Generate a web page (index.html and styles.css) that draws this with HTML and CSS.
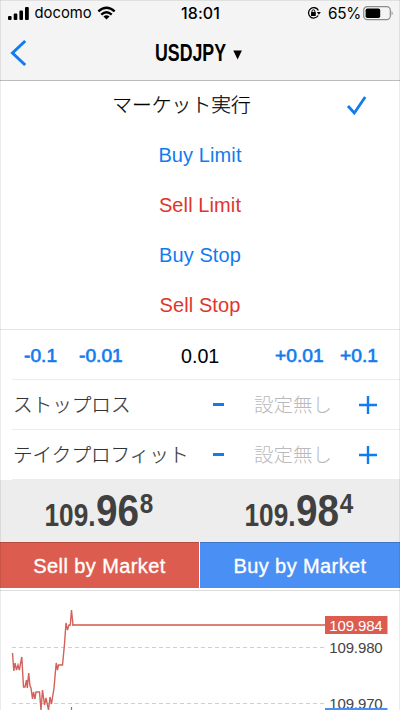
FILE: index.html
```html
<!DOCTYPE html>
<html lang="ja">
<head>
<meta charset="utf-8">
<title>USDJPY</title>
<link rel="stylesheet" href="styles.css">
</head>
<body>
<div class="screen">
  <header class="top">
    <div class="status">
      <div class="status-left">
        <svg width="21" height="13" viewBox="0 0 21 13"><rect x="0" y="9" width="3.6" height="4" rx="1"/><rect x="5.7" y="6.5" width="3.6" height="6.5" rx="1"/><rect x="11.4" y="3.5" width="3.6" height="9.5" rx="1"/><rect x="17" y="0" width="3.8" height="13" rx="1"/></svg>
        <span class="carrier">docomo</span>
        <svg width="19" height="14" viewBox="0 0 20 14"><g fill="none" stroke="#000" stroke-width="2.5"><path d="M1.4 5.2Q10 -2.4 18.6 5.2"/><path d="M4.5 8.6Q10 3.8 15.5 8.6"/></g><path d="M6.8 10.6Q10 8 13.2 10.6L10 13.8Z"/></svg>
      </div>
      <span class="time">18:01</span>
      <div class="status-right">
        <svg width="14" height="14" viewBox="0 0 14 14"><path d="M11.2 9.5A5.2 5.2 0 1 1 11.4 4.5" fill="none" stroke="#000" stroke-width="1.3"/><path d="M9.8 6h4L11.9 8.8z"/><rect x="4" y="6" width="4.8" height="4" rx=".5"/><path d="M5 6.5V5.2a1.4 1.4 0 0 1 2.8 0v1.3" fill="none" stroke="#000"/></svg>
        <span class="percent">65%</span>
        <svg width="30" height="15" viewBox="0 0 30 15"><rect x=".7" y=".7" width="26.6" height="13" rx="3.6" fill="none" stroke="#8b8b8b" stroke-width="1.2"/><rect x="2.6" y="2.5" width="14.6" height="9.5" rx="1.8"/><path d="M28.6 5Q30.6 7.2 28.6 9.5Z" fill="#8b8b8b"/></svg>
      </div>
    </div>
    <div class="nav">
      <svg class="back" width="18" height="28" viewBox="0 0 18 28"><path d="M15.2 2L2.5 14L15.2 26" fill="none" stroke="#127bee" stroke-width="3"/></svg>
      <svg class="title" width="90" height="32"><text x="0" y="24" textLength="71" lengthAdjust="spacingAndGlyphs">USDJPY</text><path d="M78.3 13.5h8.6L82.6 22.5z"/></svg>
    </div>
  </header>

  <ul class="orders">
    <li class="jp"><span>マーケット実行</span>
      <svg class="check" width="22" height="21" viewBox="0 0 22 21"><path d="M2 11L8.3 18L19.2 2" fill="none" stroke="#127bee" stroke-width="2.8"/></svg></li>
    <li class="buy">Buy Limit</li>
    <li class="sell">Sell Limit</li>
    <li class="buy">Buy Stop</li>
    <li class="sell">Sell Stop</li>
  </ul>

  <div class="volume">
    <span>-0.1</span><span>-0.01</span><span class="amount">0.01</span><span>+0.01</span><span>+0.1</span>
  </div>
  <div class="level"><span class="label">ストップロス</span><i class="minus"></i><span class="unset">設定無し</span>
    <svg width="18" height="18" viewBox="0 0 18 18"><path d="M9 0V18M0 9H18" stroke="#127bee" stroke-width="2.4"/></svg></div>
  <div class="level"><span class="label">テイクプロフィット</span><i class="minus"></i><span class="unset">設定無し</span>
    <svg width="18" height="18" viewBox="0 0 18 18"><path d="M9 0V18M0 9H18" stroke="#127bee" stroke-width="2.4"/></svg></div>

  <div class="prices">
    <svg width="200" height="62"><text x="44.5" y="46" font-size="30.5" textLength="51" lengthAdjust="spacingAndGlyphs">109.</text><text x="96" y="46" font-size="45" textLength="43" lengthAdjust="spacingAndGlyphs">96</text><text x="139.8" y="33" font-size="27.5" textLength="13.5" lengthAdjust="spacingAndGlyphs">8</text></svg>
    <svg width="200" height="62"><text x="44.5" y="46" font-size="30.5" textLength="51" lengthAdjust="spacingAndGlyphs">109.</text><text x="96" y="46" font-size="45" textLength="43" lengthAdjust="spacingAndGlyphs">98</text><text x="139.8" y="33" font-size="27.5" textLength="13.5" lengthAdjust="spacingAndGlyphs">4</text></svg>
  </div>
  <div class="actions">
    <button class="action-sell">Sell by Market</button>
    <button class="action-buy">Buy by Market</button>
  </div>

  <svg class="chart" width="400" height="119" viewBox="0 0 400 119">
    <path d="M12 56.5H324M12 112.5H324" stroke="#cfcfcf" stroke-dasharray="4 3"/>
    <path d="M72 34H325" stroke="#e08178" stroke-width="1.8"/>
    <path d="M12.5 63L13.8 81L15 73L16.5 80L18 75L19.3 80L21 71L21.8 67L23.5 97H25L26.5 90L27.3 98L28.7 83L30 96L31 98L32.5 109L33.5 102L35 109L36 102H39.5L41 120L42.5 100L44.5 115L46 108L48.5 120L50 107L51.5 114L54 98L56.2 73L57.5 80L58.5 75H62.5L64.5 54L66 33L67.5 40L69 35H70.3L71.5 20L73 35" transform="translate(0 -1)" fill="none" stroke="#d36159" stroke-width="1.4"/>
    <path d="M71.5 116V120" stroke="#4a83e8" stroke-width="1.2"/>
    <text x="329.2" y="62.3" textLength="53.5">109.980</text>
    <text x="329.2" y="118.3" textLength="53.5">109.970</text>
    <rect x="325" y="25" width="62.5" height="18" fill="#dd5c50"/>
    <text class="current" x="329.2" y="39.7" textLength="53.5">109.984</text>
    <rect x="325" y="117" width="62.5" height="18" fill="#4a90f4"/>
  </svg>
</div>
</body>
</html>
```
FILE: styles.css
```css
* { box-sizing: border-box; }
body { margin: 0; background: #fff; font-family: "Liberation Sans", "Noto Sans CJK JP", sans-serif; }
.screen { position: relative; width: 400px; height: 710px; overflow: hidden; }
.screen::after { content: ""; position: absolute; inset: 0; border-left: 1px solid rgba(0,0,0,.08); border-right: 1px solid rgba(0,0,0,.08); pointer-events: none; }
svg { display: block; flex: none; }
.top { height: 81px; background: #f4f4f4; border-top: 1px solid #e0e0e0; border-bottom: 1px solid #bcbcbc; }
.status { display: grid; grid-template-columns: 1fr auto 1fr; align-items: center; height: 24px; padding: 0 7px 0 8px; font-family: Inter, sans-serif; font-size: 15px; }
.status-left, .status-right { display: flex; align-items: center; }
.status-left { gap: 5.5px; }
.status-right { justify-content: flex-end; gap: 2px; }
.percent { margin-left: 5px; font-size: 15.3px; letter-spacing: -.3px; }
.carrier { font-size: 14.8px; }
.time { font-weight: 500; font-size: 16px; letter-spacing: .1px; }
.nav { height: 55px; display: flex; align-items: center; padding-left: 9px; }
.back { margin: 1px 0 0 1px; }
.title { margin: 0 0 0 127px; font-weight: bold; font-size: 23px; }
.orders { list-style: none; margin: 0; padding: 0; height: 249px; border-bottom: 1px solid #e5e5e5; font-size: 20px; }
.orders li { position: relative; height: 50px; display: flex; align-items: center; justify-content: center; letter-spacing: .1px; }
.orders .jp { height: 49px; padding: 0 37px 4px 0; font-family: "Noto Sans CJK JP", sans-serif; font-size: 19.7px; font-weight: 300; -webkit-text-stroke: .25px #000; }
.orders .check { position: absolute; left: 346px; top: 14px; }
.buy { color: #127bee; }
.sell { color: #e0352c; }
.volume { display: grid; grid-template-columns: 55px 83px 125px 65px 60px; height: 50px; padding-left: 12px; font-size: 19.2px; line-height: 52px; color: #127bee; -webkit-text-stroke: .65px #127bee; background: linear-gradient(#ececec, #ececec) 12px 49px / 388px 1px no-repeat; }
.volume span { height: 49px; padding-left: 12px; white-space: nowrap; }
.volume span:nth-child(n+4) { padding-left: 0; }
.volume .amount { padding-left: 31px; color: #000; font-size: 19.7px; -webkit-text-stroke: 0; }
.level { display: flex; align-items: center; height: 50px; background: linear-gradient(#ececec, #ececec) 12px 49px / 388px 1px no-repeat; font-family: "Noto Sans CJK JP", sans-serif; font-size: 19.6px; font-weight: 300; color: #333; padding-left: 13px; }
.label { width: 200px; padding-bottom: 3px; -webkit-text-stroke: .2px #333; }
.minus { width: 11px; height: 3px; background: #127bee; margin-top: -1px; }
.unset { width: 106px; padding-bottom: 3px; margin-left: 30px; margin-right: -1px; color: #b9b9be; font-size: 19.5px; }
.prices { display: flex; height: 62px; background: #ededed; font-weight: bold; fill: #404040; }
.actions { display: grid; grid-template-columns: 199px 200px; height: 46px; gap: 1px; }
.actions button { border: 0; padding: 0; color: #fff; font: 20px/44px "Liberation Sans", sans-serif; letter-spacing: .4px; -webkit-text-stroke: .35px #fff; border-top: 1px solid rgba(0,0,0,.18); }
.action-sell { background: #dd5c50; }
.action-buy { background: #4a90f4; }
.chart { margin-top: 3px; box-shadow: 0 -1px #dedede; font-size: 15px; fill: #444; }
.chart .current { fill: #fff; }
```
